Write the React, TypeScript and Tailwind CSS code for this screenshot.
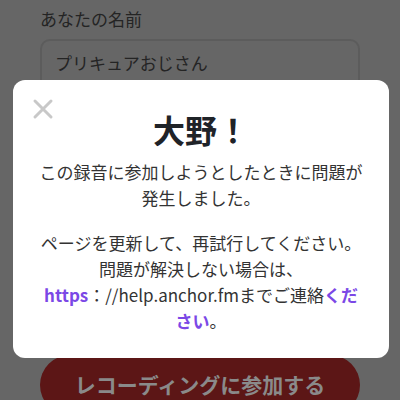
import React from 'react';

const jp = 'font-["Noto_Sans_CJK_JP","Noto_Sans",sans-serif]';

export default function App() {
  return (
    <div className={`relative h-[400px] w-[400px] overflow-hidden bg-[#666666] ${jp}`}>
      {/* Dimmed page behind the dialog */}
      <div className="px-10 pt-[6px]">
        <label className="block text-[17px] leading-[26px] text-[#242424]">あなたの名前</label>
        <div className="mt-[7px] h-[58px] rounded-[10px] border-2 border-[#5c5c5c] px-[13px] pt-[9px] text-[17px] leading-[26px] text-[#242424]">
          プリキュアおじさん
        </div>
        <div className="mt-[258px] flex h-[60px] items-center justify-center rounded-full bg-[#5c1616] text-[21px] font-bold text-[#8a8a8a]">
          レコーディングに参加する
        </div>
      </div>

      {/* Dialog */}
      <div className="absolute left-[13px] top-[80px] w-[376px] rounded-[12px] bg-white px-6 pb-[24px] pt-[29px] text-center">
        <button className="absolute left-[19px] top-[18px] text-[#c8c8c8]">
          <svg width="22" height="22" viewBox="0 0 22 22" fill="none" stroke="currentColor" strokeWidth="3" strokeLinecap="round">
            <path d="M3 3L19 19M19 3L3 19" />
          </svg>
        </button>
        <h2 className="text-[32px] font-bold leading-[40px] text-[#1f2328]">大野！</h2>
        <p className="mt-[10px] text-[17px] leading-[26px] text-[#333333]">
          この録音に参加しようとしたときに問題が発生しました。
        </p>
        <p className="mt-[19px] text-[17px] leading-[26px] text-[#333333]">
          ページを更新して、再試行してください。
          <br />
          問題が解決しない場合は、
          <br />
          <span className="font-bold text-[#7b48e6]">https</span>：//help.anchor.fmまでご連絡
          <span className="font-bold text-[#7b48e6]">ください</span>。
        </p>
      </div>
    </div>
  );
}
